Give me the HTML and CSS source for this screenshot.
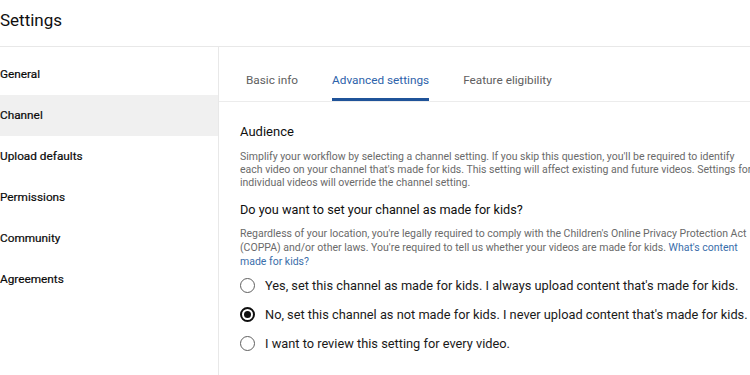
FILE: index.html
```html
<!DOCTYPE html>
<html lang="en">
<head>
<meta charset="utf-8">
<title>Settings</title>
<link rel="stylesheet" href="styles.css">
</head>
<body>
<div class="page">
  <header class="header">Settings</header>
  <div class="layout">
    <nav class="sidebar">
      <div class="nav-item">General</div>
      <div class="nav-item active">Channel</div>
      <div class="nav-item">Upload defaults</div>
      <div class="nav-item">Permissions</div>
      <div class="nav-item">Community</div>
      <div class="nav-item">Agreements</div>
    </nav>
    <main class="main">
      <div class="tabs">
        <div class="tab">Basic info</div>
        <div class="tab active">Advanced settings</div>
        <div class="tab">Feature eligibility</div>
      </div>
      <section class="content">
        <h2 class="heading">Audience</h2>
        <p class="desc">Simplify your workflow by selecting a channel setting. If you skip this question, you'll be required to identify<br>each video on your channel that's made for kids. This setting will affect existing and future videos. Settings for<br>individual videos will override the channel setting.</p>
        <h3 class="question">Do you want to set your channel as made for kids?</h3>
        <p class="desc legal">Regardless of your location, you're legally required to comply with the Children's Online Privacy Protection Act<br>(COPPA) and/or other laws. You're required to tell us whether your videos are made for kids. <a class="link" href="#">What's content<br>made for kids?</a></p>
        <div class="radios">
          <div class="radio-row"><span class="radio"></span><span class="label">Yes, set this channel as made for kids. I always upload content that's made for kids.</span></div>
          <div class="radio-row"><span class="radio checked"></span><span class="label">No, set this channel as not made for kids. I never upload content that's made for kids.</span></div>
          <div class="radio-row"><span class="radio"></span><span class="label">I want to review this setting for every video.</span></div>
        </div>
      </section>
    </main>
  </div>
</div>
</body>
</html>
```
FILE: styles.css
```css
* { box-sizing: border-box; }
html, body {
  margin: 0;
  padding: 0;
  background: #ffffff;
  overflow: hidden;
}
body {
  font-family: Roboto, "Liberation Sans", Arial, sans-serif;
  color: #0f0f0f;
  width: 750px;
  height: 375px;
}
.page {
  display: flex;
  flex-direction: column;
  height: 375px;
}
.header {
  height: 47px;
  padding-top: 8px;
  font-size: 17px;
  line-height: 24px;
  font-weight: 400;
  border-bottom: 1px solid #e8e8e8;
}
.layout {
  flex: 1;
  display: grid;
  grid-template-columns: 219px 1fr;
}
.sidebar {
  border-right: 1px solid #e8e8e8;
  padding-top: 7px;
}
.nav-item {
  height: 41px;
  line-height: 41px;
  font-size: 11.8px;
  font-weight: 400;
  color: #0a0a0a;
  -webkit-text-stroke: 0.2px #0a0a0a;
}
.nav-item.active {
  background: #f0f0f0;
}
.main {
  min-width: 0;
}
.tabs {
  display: flex;
  gap: 34px;
  padding-left: 27px;
  border-bottom: 1px solid #ececec;
}
.tab {
  height: 54px;
  padding-top: 25px;
  font-size: 11.8px;
  line-height: 16px;
  color: #606060;
  border-bottom: 3px solid transparent;
  white-space: nowrap;
}
.tab.active {
  color: #2d62aa;
  border-bottom-color: #1f5399;
  border-radius: 2px 2px 0 0;
}
.content {
  padding: 21px 0 0 21px;
}
.heading {
  margin: 0 0 9px;
  font-size: 13px;
  line-height: 18px;
  font-weight: 400;
}
.desc {
  margin: 0;
  font-size: 10.5px;
  line-height: 13px;
  color: #6a6a6a;
  white-space: nowrap;
}
.question {
  margin: 13px 0 0;
  font-size: 12.7px;
  line-height: 16px;
  font-weight: 400;
}
.legal {
  margin-top: 9px;
  line-height: 14px;
}
.link {
  color: #3a6eaa;
  text-decoration: none;
}
.radios {
  margin-top: 2px;
}
.radio-row {
  display: flex;
  align-items: center;
  height: 29px;
  gap: 10px;
  white-space: nowrap;
}
.radio {
  flex: none;
  width: 15px;
  height: 15px;
  border: 1.5px solid #5f5f5f;
  border-radius: 50%;
  display: flex;
  align-items: center;
  justify-content: center;
}
.radio.checked {
  border: 2px solid #0f0f0f;
}
.radio.checked::after {
  content: "";
  width: 7px;
  height: 7px;
  border-radius: 50%;
  background: #0f0f0f;
}
.label {
  font-size: 12.8px;
  line-height: 16px;
  color: #1a1a1a;
}
```
